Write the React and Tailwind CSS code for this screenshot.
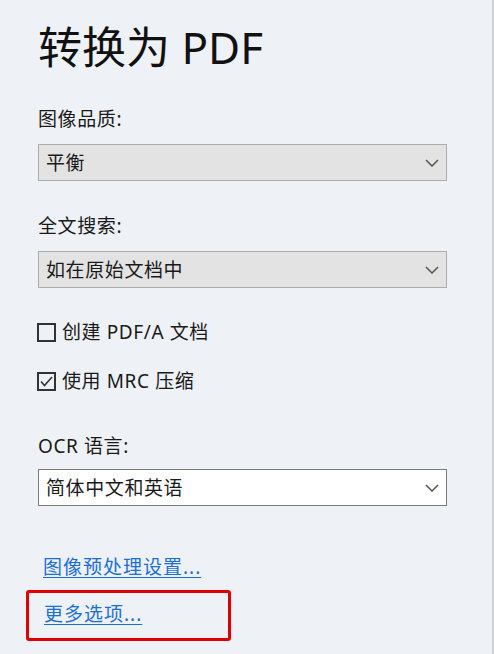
import React from "react";

const font = { fontFamily: '"Noto Sans", "Noto Sans CJK SC", sans-serif' };

function Chevron() {
  return (
    <svg width="14" height="8" viewBox="0 0 14 8" className="shrink-0">
      <polyline points="1,1 7,7 13,1" fill="none" stroke="#555" strokeWidth="1.5" />
    </svg>
  );
}

function Select({ value, light }) {
  return (
    <div
      className={`w-[409px] h-[37px] flex items-center justify-between pl-[7px] pr-[7px] border ${
        light ? "bg-white border-[#7a7a7a]" : "bg-[#e3e3e3] border-[#adadad]"
      }`}
    >
      <span className="text-[19px] leading-[24px] tracking-[0.6px] text-[#1a1a1a]">{value}</span>
      <Chevron />
    </div>
  );
}

function Check({ label, checked }) {
  return (
    <div className="flex items-center h-[24px] -ml-[1px]">
      <div className="w-[19px] h-[19px] border-2 border-[#333] bg-transparent flex items-center justify-center">
        {checked && (
          <svg width="13" height="11" viewBox="0 0 13 11">
            <polyline points="1,5.5 4.5,9.5 12,1" fill="none" stroke="#333" strokeWidth="1.6" />
          </svg>
        )}
      </div>
      <span className="ml-[6px] text-[19px] leading-[24px] tracking-[0.6px] text-[#1a1a1a]">{label}</span>
    </div>
  );
}

export default function App() {
  return (
    <div style={font} className="w-[494px] h-[654px] bg-[#eef1f5] border-r-2 border-[#cdd1d8] overflow-hidden">
      <div className="flex flex-col items-start pl-[38px] pt-[21px]">
        <h1 className="text-[44px] leading-[52px] font-normal text-[#111]">转换为 PDF</h1>

        <div className="mt-[34px] text-[19px] leading-[24px] tracking-[0.6px] text-[#1a1a1a]">图像品质:</div>
        <div className="mt-[13px]">
          <Select value="平衡" />
        </div>

        <div className="mt-[33px] text-[19px] leading-[24px] tracking-[0.6px] text-[#1a1a1a]">全文搜索:</div>
        <div className="mt-[13px]">
          <Select value="如在原始文档中" />
        </div>

        <div className="mt-[32px]">
          <Check label="创建 PDF/A 文档" />
        </div>
        <div className="mt-[25px]">
          <Check label="使用 MRC 压缩" checked />
        </div>

        <div className="mt-[41px] text-[19px] leading-[24px] tracking-[0.6px] text-[#1a1a1a]">OCR 语言:</div>
        <div className="mt-[11px]">
          <Select value="简体中文和英语" light />
        </div>

        <a className="mt-[49px] ml-[5px] text-[19px] leading-[24px] tracking-[1px] text-[#1a6fd6] underline underline-offset-[3px] cursor-pointer">
          图像预处理设置...
        </a>

        <div className="mt-[11px] -ml-[12px] w-[205px] h-[51px] border-[3px] border-[#e00000] rounded-[3px] pl-[15px] pt-[9px]">
          <a className="text-[19px] leading-[24px] tracking-[1px] text-[#1a6fd6] underline underline-offset-[3px] cursor-pointer">
            更多选项...
          </a>
        </div>
      </div>
    </div>
  );
}
